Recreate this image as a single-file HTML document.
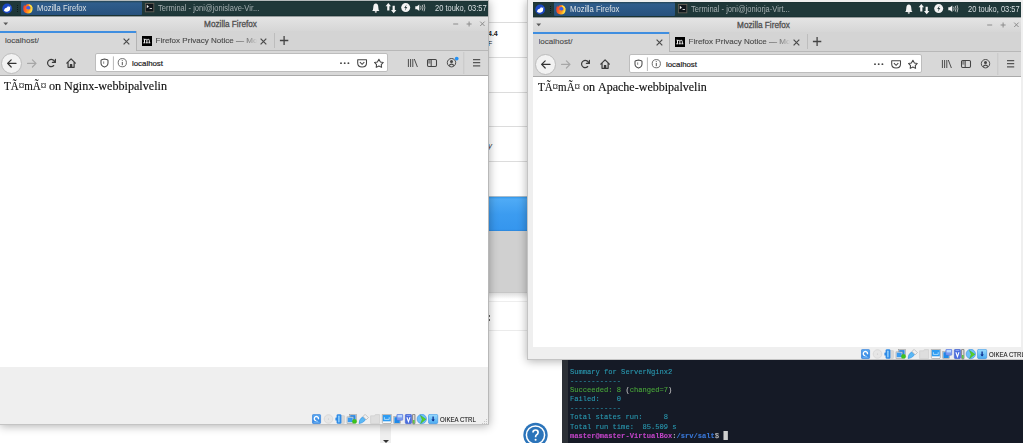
<!DOCTYPE html><html><head><meta charset="utf-8"><style>
*{margin:0;padding:0;box-sizing:border-box}
svg{display:block}
html,body{width:1023px;height:443px;overflow:hidden;background:#fff;font-family:"Liberation Sans",sans-serif}
.abs{position:absolute}
#bg{position:absolute;left:0;top:0;width:1023px;height:443px;background:#fff}
.vbox{position:absolute;background:#efefef;box-shadow:0 1px 9px rgba(0,0,0,.32)}
.vclip{position:absolute;overflow:hidden}
.g{position:absolute;width:488px;height:400px}
.g>*{position:absolute}
.panel{left:0;top:1px;width:488px;height:15px;background:linear-gradient(#172d2e 0,#1f3839 1px,#1f3839 14px,#1a3233 14px)}
.whisk{left:2px;top:2.5px;width:11px;height:11px}
.sepdots{left:16.5px;top:5px;width:1px;height:7px;border-left:1px dotted #0d1a1b}
.ffbtn{left:21px;top:1.2px;width:121px;height:13.8px;background:linear-gradient(#3465955a 0,#2f5d8c 15%,#27517d);border-radius:1px}
.fficon{left:22.3px;top:2.6px;width:12px;height:12px}
.ptxt{top:3px;height:12px;font-size:8.2px;line-height:12px;white-space:nowrap;transform-origin:0 0}
.termicon{left:145px;top:4px;width:9px;height:9px;background:#222;border:1px solid #7a7a7a}
.termicon:after{content:"";position:absolute;left:1px;top:1px;width:3px;height:3px;border-right:1px solid #ddd;border-bottom:1px solid #ddd;transform:rotate(-45deg) scale(.8)}
.tray{position:absolute}
.titlebar{left:0;top:16px;width:488px;height:15px;background:linear-gradient(#969c9c 0,#969c9c 1px,#e4e4e4 1px,#d6d6d6 100%)}
.tarrow{left:3.3px;top:22.2px;width:0;height:0;border-left:2.3px solid transparent;border-right:2.3px solid transparent;border-top:2.8px solid #555}
.ttitle{left:0;top:18.3px;width:461px;text-align:center;font-weight:normal;font-size:8.2px;line-height:14px;color:#505050;-webkit-text-stroke:0.3px #505050}
.tabbar{left:0;top:31px;width:488px;height:20px;background:#d4d4d4;border-bottom:1px solid #b8b8b8}
.tabact{left:0;top:31px;width:137px;height:20px;background:#d8d8d8;border-right:1px solid #b4b4b4}
.tabline{left:0;top:31px;width:136px;height:2px;background:#3f8ee0}
.tabtxt{top:34.8px;height:12px;font-size:8.05px;line-height:12px;white-space:nowrap;overflow:hidden;-webkit-text-stroke:0.12px currentColor}
.fade{-webkit-mask-image:linear-gradient(90deg,#000 84%,rgba(0,0,0,.35) 96%,transparent)}
.micon{left:141.5px;top:35px;width:10.5px;height:10.5px;background:#000;color:#fff;font-family:"Liberation Serif",serif;font-weight:bold;font-size:10px;line-height:9px;text-align:center;letter-spacing:-0.5px}
.tabsep{left:274px;top:33px;width:1px;height:15px;background:#bdbdbd}
.navbar{left:0;top:51px;width:488px;height:24.5px;background:#d8d8d8;border-bottom:1px solid #aaa}
.backc{left:1px;top:52.5px;width:21px;height:21px;border-radius:50%;background:#f2f2f2;border:1px solid #bcbcbc}
.urlbar{left:95px;top:53px;width:293px;height:19px;background:#fff;border:1px solid #bdbdbd;border-radius:2px}
.urltxt{left:132px;top:57.6px;height:12px;font-size:7.85px;line-height:12px;color:#222;-webkit-text-stroke:0.2px #222}
.content{left:0;top:75.5px;width:488px;height:291.5px;background:#fff}
.ctext{top:78px;font-family:"Liberation Serif",serif;font-size:12.2px;line-height:16px;color:#111;white-space:nowrap;-webkit-text-stroke:0.15px #111;transform-origin:0 0}
.term{position:absolute;left:562px;top:360px;width:461px;height:83px;background:#151a26}
.term .strip{position:absolute;left:0;top:0;width:6px;height:83px;background:#2c3036}
.tl{position:absolute;left:7.5px;font-family:"Liberation Mono",monospace;font-size:8.1px;line-height:9.1px;white-space:pre;color:#2a9cb4;-webkit-text-stroke:0.1px currentColor;transform:scaleX(.877);transform-origin:0 0}
</style></head><body><div id="bg"><div class="abs" style="left:488px;top:22px;width:40px;height:1px;background:#dcdcdc"></div><div class="abs" style="left:488px;top:57px;width:40px;height:1px;background:#dcdcdc"></div><div class="abs" style="left:488px;top:92px;width:40px;height:1px;background:#dcdcdc"></div><div class="abs" style="left:488px;top:126px;width:40px;height:1px;background:#dcdcdc"></div><div class="abs" style="left:488px;top:161px;width:40px;height:1px;background:#dcdcdc"></div><div class="abs" style="left:488px;top:301px;width:40px;height:1px;background:#eeeeee"></div><div class="abs" style="left:488px;top:330px;width:40px;height:1px;background:#ebebeb"></div><div class="abs" style="left:488px;top:315px;width:1.5px;height:1.5px;background:#666"></div><div class="abs" style="left:488px;top:319px;width:1.5px;height:1.5px;background:#666"></div><div class="abs" style="left:488px;top:196px;width:40px;height:1px;background:#a8bccc"></div><div class="abs" style="left:488px;top:197px;width:40px;height:34px;background:linear-gradient(#3197ea 0,#4fabf6 6%,#3c9cf0 50%,#3596ee 95%,#2c86da 100%)"></div><div class="abs" style="left:488px;top:231px;width:40px;height:61px;background:#d0d0d0"></div><div class="abs" style="left:488px;top:292px;width:40px;height:1px;background:#c6c6c6"></div><div class="abs" style="left:488px;top:293px;width:40px;height:6px;background:linear-gradient(#dedede,#fff)"></div><div class="abs" style="left:488px;top:141px;font-size:8px;font-style:italic;color:#333">y</div><div class="abs" style="left:488px;top:30px;font-size:7px;font-weight:bold;color:#222">4.4</div><div class="abs" style="left:488px;top:39.5px;font-size:7px;color:#222">F</div><div class="abs" style="left:380px;top:425px;width:11px;height:18px;background:#efefef"></div><div class="abs" style="left:383px;top:439.5px;width:0;height:0;border-left:3px solid transparent;border-right:3px solid transparent;border-top:3px solid #333"></div><svg class="abs" style="left:522px;top:422px" width="27" height="27" viewBox="0 0 27 27"><circle cx="13.5" cy="13" r="12.2" fill="#2b74ba"/><circle cx="13.5" cy="13" r="9.1" stroke="#fff" stroke-width="1.5" fill="none"/><path d="M11 10.6 Q11 8 13.6 8 Q16.1 8 16.1 10.4 Q16.1 12 14.4 12.9 Q13.6 13.4 13.6 15.2" stroke="#fff" stroke-width="1.7" fill="none"/><circle cx="13.6" cy="17.8" r="1.05" fill="#fff"/></svg></div><div class="vbox" style="left:0;top:0;width:489px;height:425px"><div class="abs" style="left:0;top:0;width:489px;height:1px;background:#b4babb"></div><div class="g" style="left:0px;top:0px"><div class="panel"></div><div class="whisk"><svg width="11" height="11" viewBox="0 0 11 11"><circle cx="5.2" cy="5.5" r="4.9" fill="#1a48c4"/><path d="M1.9 7.4 Q2.3 5 5 4.6 L6.2 2.7 L6.9 4.2 L8.3 3.1 L8.2 5.6 Q8.1 8.4 5.2 8.7 Q2.9 8.9 1.9 7.4Z" fill="#fff"/></svg></div><div class="sepdots"></div><div class="ffbtn"></div><div class="fficon"><svg width="12" height="12" viewBox="0 0 12 12"><defs><linearGradient id="ffg0" x1="0" y1="0" x2="1" y2="0.3"><stop offset="0" stop-color="#ee2a3a"/><stop offset="0.45" stop-color="#ff6a1c"/><stop offset="0.8" stop-color="#ffb21e"/><stop offset="1" stop-color="#ffe04a"/></linearGradient></defs><path d="M5.9 0.9 Q10.8 1.2 10.6 6.2 Q10.2 10.4 5.9 10.5 Q1.4 10.4 1.2 5.8 Q1.2 3.4 2.2 1.6 L2.9 3.2 Q3.4 1.2 5.9 0.9Z" fill="url(#ffg0)"/><path d="M6.6 1.3 Q10.3 2 10.4 5.6 Q9.6 3.4 7.6 3.2Z" fill="#ffe84a"/><circle cx="6.3" cy="5.1" r="2.1" fill="#3a5ee8"/><path d="M4.2 5.6 Q4.4 7.8 6.6 7.6 Q8.4 7.3 8.4 5.4 Q7.6 6.6 6 6.4 Q4.8 6.2 4.2 5.6Z" fill="#ff8a1c"/></svg></div><div class="ptxt" style="left:36.6px;transform:scaleX(.935);color:#dde2e5">Mozilla Firefox</div><svg style="left:144px;top:2px" width="11" height="11" viewBox="0 0 11 11"><rect x="1.4" y="1.4" width="8.4" height="8.4" fill="#10171c" stroke="#625e56" stroke-width="0.9"/><path d="M2.8 2.7 L4.9 4.5 L2.8 6.3Z" fill="#f0f0f0"/><rect x="5.6" y="6" width="2.4" height="0.9" fill="#e0e0e0"/></svg><div class="ptxt" style="left:158.3px;transform:scaleX(.92);color:#a4aeb0">Terminal - joni@jonislave-Vir...</div><svg class="tray" width="65" height="16" viewBox="0 0 65 16" style="left:365px;top:0px"><path d="M7.1 10.9 Q8.3 10 8.3 7.2 Q8.3 3.7 10.8 3.5 Q13.3 3.7 13.3 7.2 Q13.3 10 14.5 10.9 Z" fill="#f4f4f4"/><ellipse cx="10.8" cy="11.8" rx="1.1" ry="0.9" fill="#d8d8d8"/><path d="M23.3 2.9 L26 6.3 L24.4 6.3 L24.4 10.5 L22.2 10.5 L22.2 6.3 L20.6 6.3Z" fill="#f4f4f4"/><path d="M28.7 13.3 L31.4 9.9 L29.8 9.9 L29.8 5.8 L27.6 5.8 L27.6 9.9 L26 9.9Z" fill="#f4f4f4"/><circle cx="40.7" cy="7.6" r="4.5" fill="#f4f4f4"/><path d="M41.6 4.6 L39.2 8.1 L40.6 8.1 L39.9 10.7 L42.3 7.1 L40.9 7.1Z" fill="#2a3c3e"/><path d="M50.3 6.3 L52 6.3 L54.3 4.4 L54.3 11.1 L52 9.2 L50.3 9.2Z" fill="#f4f4f4"/><path d="M55.6 5.8 Q56.5 7.75 55.6 9.7 M57.3 4.9 Q58.6 7.75 57.3 10.6 M59.1 4.2 Q60.6 7.75 59.1 11.3" stroke="#b8bebe" stroke-width="0.95" fill="none"/></svg><div class="ptxt" style="left:434.8px;transform:scaleX(.916);color:#d9dfe2">20 touko, 03:57</div><div class="titlebar"></div><svg style="left:3px;top:21.5px" width="6" height="4" viewBox="0 0 6 4"><path d="M0.3 0.4 H5.1 L2.7 3.2Z" fill="#5a5a5a"/></svg><div class="ttitle">Mozilla Firefox</div><svg class="wbtn" width="40" height="10" viewBox="0 0 40 10" style="left:451px;top:18.9px"><path d="M2.2 5 H7.2" stroke="#8c8c8c" stroke-width="1"/><path d="M15.6 5 H20.6 M18.1 2.5 V7.5" stroke="#8c8c8c" stroke-width="1"/><path d="M29.2 2.6 L33.6 7 M33.6 2.6 L29.2 7" stroke="#8c8c8c" stroke-width="1"/></svg><div class="tabbar"></div><div class="tabact"></div><div class="tabline"></div><div class="tabtxt" style="left:5.0px;color:#4a4a4a">localhost/</div><svg class="x" style="left:121.5px;top:36.5px" width="9" height="9" viewBox="0 0 9 9"><path d="M1.6 1.6 L7.3 7.3 M7.3 1.6 L1.6 7.3" stroke="#4a4a4a" stroke-width="1.2"/></svg><svg style="left:142px;top:36px" width="10" height="10" viewBox="0 0 10 10"><rect width="10" height="10" fill="#000"/><path d="M1.6 3.1 H2.5 V6.8 M2.5 4.3 Q3.3 2.9 4.3 3.3 Q4.9 3.6 4.9 4.6 V6.8 M4.9 4.3 Q5.7 2.9 6.7 3.3 Q7.3 3.6 7.3 4.6 V6.8 M1.3 6.8 H3.4 M4.0 6.8 H5.8 M6.4 6.8 H8.3" stroke="#fff" stroke-width="0.95" fill="none"/></svg><div class="tabtxt fade" style="left:155.5px;width:101px;color:#4a4a4a">Firefox Privacy Notice — Mozilla</div><svg class="x" style="left:258.5px;top:36.5px" width="9" height="9" viewBox="0 0 9 9"><path d="M1.6 1.6 L7.3 7.3 M7.3 1.6 L1.6 7.3" stroke="#4a4a4a" stroke-width="1.2"/></svg><div class="tabsep"></div><svg class="x" style="left:279px;top:35px" width="11" height="11" viewBox="0 0 11 11"><path d="M0.9 5.5 H9.3 M5.1 1.1 V9.9" stroke="#444" stroke-width="1.3"/></svg><div class="navbar"></div><div class="backc" style="left:1px"></div><svg style="position:absolute;left:0px;top:50px" width="90" height="25" viewBox="0 0 90 25"><g transform="translate(7,8.6) scale(0.6)"><path d="M15 7H3.414l4.293-4.293a1 1 0 0 0-1.414-1.414l-6 6a1 1 0 0 0 0 1.414l6 6a1 1 0 0 0 1.414-1.414L3.414 9H15a1 1 0 0 0 0-2z" fill="#333"/></g><g transform="translate(36.6,8.6) scale(-0.6,0.6)"><path d="M15 7H3.414l4.293-4.293a1 1 0 0 0-1.414-1.414l-6 6a1 1 0 0 0 0 1.414l6 6a1 1 0 0 0 1.414-1.414L3.414 9H15a1 1 0 0 0 0-2z" fill="#a6a6a6"/></g><g transform="translate(46.4,8.2) scale(0.6)"><path d="M15 1a1 1 0 0 0-1 1v2.418A6.995 6.995 0 1 0 8 15a6.954 6.954 0 0 0 4.95-2.05 1 1 0 0 0-1.414-1.414A5.019 5.019 0 1 1 12.549 6H10a1 1 0 0 0 0 2h5a1 1 0 0 0 1-1V2a1 1 0 0 0-1-1z" fill="#3a3a3a"/></g><g transform="translate(66.2,8.2) scale(0.61)"><path d="M15.707 7.293l-7-7a1 1 0 0 0-1.414 0l-7 7a1 1 0 0 0 1.414 1.414L2 8.414V15a1 1 0 0 0 1 1h10a1 1 0 0 0 1-1V8.414l.293.293a1 1 0 0 0 1.414-1.414zM12 14h-2v-3.5a1 1 0 0 0-1-1H7a1 1 0 0 0-1 1V14H4V6.414l4-4 4 4z" fill="#3a3a3a"/><rect x="6.6" y="10" width="2.8" height="4.5" fill="#3a3a3a"/></g></svg><div class="urlbar" style="left:95px"></div><svg style="position:absolute;left:96px;top:54.7px" width="300" height="18" viewBox="0 0 300 18"><path d="M5 5.5 Q5 4.9 5.7 4.7 L8.5 4 L11.3 4.7 Q12 4.9 12 5.5 L12 8 Q12 10.9 8.5 12.1 Q5 10.9 5 8Z" stroke="#4a4a4a" stroke-width="1.05" fill="none" stroke-linejoin="round"/><path d="M7.7 6.4 V8.8" stroke="#777" stroke-width="0.9"/><path d="M17.4 1.4 V15" stroke="#b8b8b8" stroke-width="1"/><circle cx="26.3" cy="7.7" r="4.1" stroke="#555" stroke-width="0.85" fill="none"/><path d="M26.3 6.9 V10.2 M26.3 5.1 V5.9" stroke="#555" stroke-width="1"/><circle cx="245" cy="8.15" r="0.95" fill="#444"/><circle cx="248.7" cy="8.15" r="0.95" fill="#444"/><circle cx="252.4" cy="8.15" r="0.95" fill="#444"/><path d="M261.7 4.7 H270.5 V8 Q270.5 12 266.1 12 Q261.7 12 261.7 8 Z" stroke="#444" stroke-width="1.05" fill="none" stroke-linejoin="round"/><path d="M263.9 7.2 L266.1 9.3 L268.3 7.2" stroke="#444" stroke-width="1.05" fill="none"/><path d="M282.90 4.30 L284.40 7.05 L287.27 7.45 L285.25 9.60 L285.60 12.35 L282.90 11.05 L280.20 12.35 L280.55 9.60 L278.53 7.45 L281.40 7.05Z" stroke="#444" stroke-width="1.05" fill="none" stroke-linejoin="round"/></svg><div class="urltxt" style="left:132px">localhost</div><svg style="position:absolute;left:400px;top:50px" width="88" height="25" viewBox="0 0 88 25"><path d="M8.4 9 V17 M10.6 9 V17 M12.8 9 V17 M14.3 9 L17.4 17" stroke="#444" stroke-width="0.95" fill="none"/><rect x="27.5" y="9.4" width="9" height="7" rx="1.2" stroke="#444" stroke-width="1.05" fill="none"/><path d="M31.2 9.4 V16.4" stroke="#444" stroke-width="1"/><rect x="28.2" y="10" width="2.5" height="3.6" fill="#888"/><circle cx="51.5" cy="12.7" r="4.2" stroke="#444" stroke-width="0.95" fill="none"/><circle cx="51.5" cy="11.5" r="1.5" fill="#444"/><path d="M49 15.6 Q51.5 12.8 54 15.6" stroke="#444" stroke-width="1.3" fill="none"/><circle cx="56.7" cy="8.6" r="1.9" fill="#2592f5"/><path d="M63.8 2 V24" stroke="#c8c8c8" stroke-width="1"/><path d="M73 9.7 H80.2 M73 12.7 H80.2 M73 15.9 H80.2" stroke="#555" stroke-width="1.25" fill="none"/></svg><div class="content"></div><div class="ctext" style="left:4.4px;transform:scaleX(0.902)">TÃ¤mÃ¤</div><div class="ctext" style="left:49.1px;transform:scaleX(0.999)">on</div><div class="ctext" style="left:63.8px;transform:scaleX(0.994)">Nginx-webbipalvelin</div></div><div class="abs" style="left:488px;top:0;width:1px;height:425px;background:#b8b8b8"></div><div class="abs" style="left:0;top:424px;width:489px;height:1px;background:#c4c4c4"></div><svg style="position:absolute;left:312px;top:414px" width="128" height="11" viewBox="0 0 128 11"><defs><linearGradient id="vb1" x1="0" y1="0" x2="0" y2="1"><stop offset="0" stop-color="#5aa8f0"/><stop offset="1" stop-color="#2a7fe0"/></linearGradient><linearGradient id="vb2" x1="0" y1="0" x2="0" y2="1"><stop offset="0" stop-color="#9adcff"/><stop offset="1" stop-color="#4aaaf0"/></linearGradient></defs><rect x="0.4" y="0.4" width="8.2" height="9.2" rx="1.2" fill="url(#vb1)" stroke="#2a78d8" stroke-width="0.6"/><path d="M6.37 5.32 A2.1 2.1 0 1 0 4.04 6.67" stroke="#fff" stroke-width="1.35" fill="none"/><path d="M4.6 6.2 L6.2 7.6 L4.2 7.8Z" fill="#d8eeff"/><rect x="1.4" y="7.8" width="6.2" height="0.8" fill="#7cc0f8"/><circle cx="16.5" cy="5" r="4.3" fill="#e6e6e6" stroke="#d2d2d2" stroke-width="0.7"/><circle cx="16.5" cy="5" r="0.6" fill="#c4c4c4"/><rect x="27" y="1.5" width="5.6" height="8" rx="0.8" fill="#d6d6d6" stroke="#c8c8c8" stroke-width="0.5"/><rect x="24.6" y="0.2" width="4.8" height="9.6" rx="1.4" fill="#2f8ae6"/><rect x="23.4" y="3.4" width="1.8" height="3.2" rx="0.6" fill="#2f8ae6"/><rect x="26.2" y="1.6" width="1.4" height="6.8" rx="0.6" fill="#9ad6ff"/><rect x="37.4" y="0.3" width="7" height="6.4" fill="#e8e8e8" stroke="#8a8a8a" stroke-width="0.5"/><rect x="38.2" y="1.1" width="5.4" height="4.6" fill="#2a8ae8"/><rect x="35" y="2.9" width="6.4" height="6.6" fill="#e8e8e8" stroke="#8a8a8a" stroke-width="0.5"/><rect x="35.7" y="3.6" width="5" height="4.6" fill="#3c9cf0"/><circle cx="42.5" cy="7.4" r="2.2" fill="#3cc41c" stroke="#2a9a10" stroke-width="0.3"/><path d="M47 9.6 Q46.8 5.6 50.6 2.8 L53.6 5.8 Q50.6 9.6 47 9.6Z" fill="#5ab8f4" stroke="#2a86e0" stroke-width="0.5"/><path d="M51 2.4 L53.2 0.4 L56.4 3.6 L54.2 5.8Z" fill="#f0f0f0" stroke="#9a9a9a" stroke-width="0.5"/><path d="M58.6 1.8 H62.6 L63.2 0.6 H67.6 V9.6 H58.6Z" fill="#dedede" stroke="#cacaca" stroke-width="0.6" stroke-linejoin="round"/><path d="M70.3 0.4 H79.3 V8.4 Q79.3 9.6 78 9.6 H71.6 Q70.3 9.6 70.3 8.4Z" fill="#f8f8f8" stroke="#8a8a8a" stroke-width="0.6"/><rect x="70.8" y="1" width="8" height="6.3" fill="#2e9cf2"/><path d="M72.4 3.2 V5.4 H77.2 V3.2" stroke="#d8f0ff" stroke-width="0.7" fill="none"/><rect x="81.8" y="2.6" width="6.6" height="7" fill="#e4e4e4" stroke="#8a8a8a" stroke-width="0.5"/><rect x="82.4" y="3.2" width="5.4" height="5.8" fill="#1e8ae8"/><rect x="84.8" y="0.3" width="6" height="6" rx="0.8" fill="#7a9af0" stroke="#4a6ad8" stroke-width="0.5"/><rect x="85.6" y="1" width="4.4" height="2.4" fill="#b8d8ff"/><rect x="93.3" y="0.3" width="6.3" height="9.4" rx="1.2" fill="#4a6ee0" stroke="#3a58c0" stroke-width="0.5"/><path d="M94.9 3.3 L96.45 7.6 L98 3.3" stroke="#fff" stroke-width="1.1" fill="none"/><rect x="94.6" y="1.3" width="3.7" height="0.6" fill="#a8c0ff"/><rect x="100.7" y="0.3" width="2.2" height="9.5" rx="0.5" fill="#f4f4f4" stroke="#2a2a2a" stroke-width="0.6"/><rect x="101.2" y="6" width="1.2" height="3.4" fill="#3cc81c"/><circle cx="109.8" cy="5" r="4.7" fill="#6cc0f8" stroke="#3a8ee0" stroke-width="0.6"/><path d="M108.4 1.4 L113.9 5.3 L108.6 9.6 L110.2 5.4Z" fill="#5ad424" stroke="#38a010" stroke-width="0.4"/><rect x="116.5" y="0.3" width="9.2" height="9.4" rx="1.4" fill="url(#vb2)" stroke="#3a8ee0" stroke-width="0.6"/><path d="M121.1 2.6 V6.2" stroke="#0a2a8a" stroke-width="1.3"/><path d="M119.3 5.4 L121.1 7.6 L122.9 5.4Z" fill="#0a2a8a"/></svg><div class="abs" style="left:440px;top:414.4px;font-size:7.6px;line-height:12px;color:#2a2a2a;white-space:nowrap;transform:scaleX(.8);transform-origin:0 0;-webkit-text-stroke:0.15px #2a2a2a">OIKEA CTRL</div><svg class="abs" style="left:480px;top:418px" width="8" height="8" viewBox="0 0 8 8"><g fill="#c4c4c4"><rect x="6" y="1" width="1" height="1"/><rect x="4" y="3" width="1" height="1"/><rect x="6" y="3" width="1" height="1"/><rect x="2" y="5" width="1" height="1"/><rect x="4" y="5" width="1" height="1"/><rect x="6" y="5" width="1" height="1"/></g></svg></div><div class="vbox" style="left:527px;top:0;width:496px;height:360px"><div class="abs" style="left:6px;top:0;width:490px;height:347px;overflow:hidden"><div class="g" style="left:0px;top:1px"><div class="panel"></div><div class="whisk"><svg width="11" height="11" viewBox="0 0 11 11"><circle cx="5.2" cy="5.5" r="4.9" fill="#1a48c4"/><path d="M1.9 7.4 Q2.3 5 5 4.6 L6.2 2.7 L6.9 4.2 L8.3 3.1 L8.2 5.6 Q8.1 8.4 5.2 8.7 Q2.9 8.9 1.9 7.4Z" fill="#fff"/></svg></div><div class="sepdots"></div><div class="ffbtn"></div><div class="fficon"><svg width="12" height="12" viewBox="0 0 12 12"><defs><linearGradient id="ffg0" x1="0" y1="0" x2="1" y2="0.3"><stop offset="0" stop-color="#ee2a3a"/><stop offset="0.45" stop-color="#ff6a1c"/><stop offset="0.8" stop-color="#ffb21e"/><stop offset="1" stop-color="#ffe04a"/></linearGradient></defs><path d="M5.9 0.9 Q10.8 1.2 10.6 6.2 Q10.2 10.4 5.9 10.5 Q1.4 10.4 1.2 5.8 Q1.2 3.4 2.2 1.6 L2.9 3.2 Q3.4 1.2 5.9 0.9Z" fill="url(#ffg0)"/><path d="M6.6 1.3 Q10.3 2 10.4 5.6 Q9.6 3.4 7.6 3.2Z" fill="#ffe84a"/><circle cx="6.3" cy="5.1" r="2.1" fill="#3a5ee8"/><path d="M4.2 5.6 Q4.4 7.8 6.6 7.6 Q8.4 7.3 8.4 5.4 Q7.6 6.6 6 6.4 Q4.8 6.2 4.2 5.6Z" fill="#ff8a1c"/></svg></div><div class="ptxt" style="left:36.6px;transform:scaleX(.935);color:#dde2e5">Mozilla Firefox</div><svg style="left:144px;top:2px" width="11" height="11" viewBox="0 0 11 11"><rect x="1.4" y="1.4" width="8.4" height="8.4" fill="#10171c" stroke="#625e56" stroke-width="0.9"/><path d="M2.8 2.7 L4.9 4.5 L2.8 6.3Z" fill="#f0f0f0"/><rect x="5.6" y="6" width="2.4" height="0.9" fill="#e0e0e0"/></svg><div class="ptxt" style="left:158.3px;transform:scaleX(.92);color:#a4aeb0">Terminal - joni@joniorja-Virt...</div><svg class="tray" width="65" height="16" viewBox="0 0 65 16" style="left:365px;top:0px"><path d="M7.1 10.9 Q8.3 10 8.3 7.2 Q8.3 3.7 10.8 3.5 Q13.3 3.7 13.3 7.2 Q13.3 10 14.5 10.9 Z" fill="#f4f4f4"/><ellipse cx="10.8" cy="11.8" rx="1.1" ry="0.9" fill="#d8d8d8"/><path d="M23.3 2.9 L26 6.3 L24.4 6.3 L24.4 10.5 L22.2 10.5 L22.2 6.3 L20.6 6.3Z" fill="#f4f4f4"/><path d="M28.7 13.3 L31.4 9.9 L29.8 9.9 L29.8 5.8 L27.6 5.8 L27.6 9.9 L26 9.9Z" fill="#f4f4f4"/><circle cx="40.7" cy="7.6" r="4.5" fill="#f4f4f4"/><path d="M41.6 4.6 L39.2 8.1 L40.6 8.1 L39.9 10.7 L42.3 7.1 L40.9 7.1Z" fill="#2a3c3e"/><path d="M50.3 6.3 L52 6.3 L54.3 4.4 L54.3 11.1 L52 9.2 L50.3 9.2Z" fill="#f4f4f4"/><path d="M55.6 5.8 Q56.5 7.75 55.6 9.7 M57.3 4.9 Q58.6 7.75 57.3 10.6 M59.1 4.2 Q60.6 7.75 59.1 11.3" stroke="#b8bebe" stroke-width="0.95" fill="none"/></svg><div class="ptxt" style="left:434.8px;transform:scaleX(.916);color:#d9dfe2">20 touko, 03:57</div><div class="titlebar"></div><svg style="left:3px;top:21.5px" width="6" height="4" viewBox="0 0 6 4"><path d="M0.3 0.4 H5.1 L2.7 3.2Z" fill="#5a5a5a"/></svg><div class="ttitle">Mozilla Firefox</div><svg class="wbtn" width="40" height="10" viewBox="0 0 40 10" style="left:452px;top:18.9px"><path d="M2.2 5 H7.2" stroke="#8c8c8c" stroke-width="1"/><path d="M15.6 5 H20.6 M18.1 2.5 V7.5" stroke="#8c8c8c" stroke-width="1"/><path d="M29.2 2.6 L33.6 7 M33.6 2.6 L29.2 7" stroke="#8c8c8c" stroke-width="1"/></svg><div class="tabbar"></div><div class="tabact"></div><div class="tabline"></div><div class="tabtxt" style="left:5.5px;color:#4a4a4a">localhost/</div><svg class="x" style="left:121.5px;top:36.5px" width="9" height="9" viewBox="0 0 9 9"><path d="M1.6 1.6 L7.3 7.3 M7.3 1.6 L1.6 7.3" stroke="#4a4a4a" stroke-width="1.2"/></svg><svg style="left:142px;top:36px" width="10" height="10" viewBox="0 0 10 10"><rect width="10" height="10" fill="#000"/><path d="M1.6 3.1 H2.5 V6.8 M2.5 4.3 Q3.3 2.9 4.3 3.3 Q4.9 3.6 4.9 4.6 V6.8 M4.9 4.3 Q5.7 2.9 6.7 3.3 Q7.3 3.6 7.3 4.6 V6.8 M1.3 6.8 H3.4 M4.0 6.8 H5.8 M6.4 6.8 H8.3" stroke="#fff" stroke-width="0.95" fill="none"/></svg><div class="tabtxt fade" style="left:155.5px;width:101px;color:#4a4a4a">Firefox Privacy Notice — Mozilla</div><svg class="x" style="left:258.5px;top:36.5px" width="9" height="9" viewBox="0 0 9 9"><path d="M1.6 1.6 L7.3 7.3 M7.3 1.6 L1.6 7.3" stroke="#4a4a4a" stroke-width="1.2"/></svg><div class="tabsep"></div><svg class="x" style="left:279px;top:35px" width="11" height="11" viewBox="0 0 11 11"><path d="M0.9 5.5 H9.3 M5.1 1.1 V9.9" stroke="#444" stroke-width="1.3"/></svg><div class="navbar"></div><div class="backc" style="left:2px"></div><svg style="position:absolute;left:1px;top:50px" width="90" height="25" viewBox="0 0 90 25"><g transform="translate(7,8.6) scale(0.6)"><path d="M15 7H3.414l4.293-4.293a1 1 0 0 0-1.414-1.414l-6 6a1 1 0 0 0 0 1.414l6 6a1 1 0 0 0 1.414-1.414L3.414 9H15a1 1 0 0 0 0-2z" fill="#333"/></g><g transform="translate(36.6,8.6) scale(-0.6,0.6)"><path d="M15 7H3.414l4.293-4.293a1 1 0 0 0-1.414-1.414l-6 6a1 1 0 0 0 0 1.414l6 6a1 1 0 0 0 1.414-1.414L3.414 9H15a1 1 0 0 0 0-2z" fill="#a6a6a6"/></g><g transform="translate(46.4,8.2) scale(0.6)"><path d="M15 1a1 1 0 0 0-1 1v2.418A6.995 6.995 0 1 0 8 15a6.954 6.954 0 0 0 4.95-2.05 1 1 0 0 0-1.414-1.414A5.019 5.019 0 1 1 12.549 6H10a1 1 0 0 0 0 2h5a1 1 0 0 0 1-1V2a1 1 0 0 0-1-1z" fill="#3a3a3a"/></g><g transform="translate(66.2,8.2) scale(0.61)"><path d="M15.707 7.293l-7-7a1 1 0 0 0-1.414 0l-7 7a1 1 0 0 0 1.414 1.414L2 8.414V15a1 1 0 0 0 1 1h10a1 1 0 0 0 1-1V8.414l.293.293a1 1 0 0 0 1.414-1.414zM12 14h-2v-3.5a1 1 0 0 0-1-1H7a1 1 0 0 0-1 1V14H4V6.414l4-4 4 4z" fill="#3a3a3a"/><rect x="6.6" y="10" width="2.8" height="4.5" fill="#3a3a3a"/></g></svg><div class="urlbar" style="left:96px"></div><svg style="position:absolute;left:97px;top:54.7px" width="300" height="18" viewBox="0 0 300 18"><path d="M5 5.5 Q5 4.9 5.7 4.7 L8.5 4 L11.3 4.7 Q12 4.9 12 5.5 L12 8 Q12 10.9 8.5 12.1 Q5 10.9 5 8Z" stroke="#4a4a4a" stroke-width="1.05" fill="none" stroke-linejoin="round"/><path d="M7.7 6.4 V8.8" stroke="#777" stroke-width="0.9"/><path d="M17.4 1.4 V15" stroke="#b8b8b8" stroke-width="1"/><circle cx="26.3" cy="7.7" r="4.1" stroke="#555" stroke-width="0.85" fill="none"/><path d="M26.3 6.9 V10.2 M26.3 5.1 V5.9" stroke="#555" stroke-width="1"/><circle cx="245" cy="8.15" r="0.95" fill="#444"/><circle cx="248.7" cy="8.15" r="0.95" fill="#444"/><circle cx="252.4" cy="8.15" r="0.95" fill="#444"/><path d="M261.7 4.7 H270.5 V8 Q270.5 12 266.1 12 Q261.7 12 261.7 8 Z" stroke="#444" stroke-width="1.05" fill="none" stroke-linejoin="round"/><path d="M263.9 7.2 L266.1 9.3 L268.3 7.2" stroke="#444" stroke-width="1.05" fill="none"/><path d="M282.90 4.30 L284.40 7.05 L287.27 7.45 L285.25 9.60 L285.60 12.35 L282.90 11.05 L280.20 12.35 L280.55 9.60 L278.53 7.45 L281.40 7.05Z" stroke="#444" stroke-width="1.05" fill="none" stroke-linejoin="round"/></svg><div class="urltxt" style="left:133px">localhost</div><svg style="position:absolute;left:401px;top:50px" width="88" height="25" viewBox="0 0 88 25"><path d="M8.4 9 V17 M10.6 9 V17 M12.8 9 V17 M14.3 9 L17.4 17" stroke="#444" stroke-width="0.95" fill="none"/><rect x="27.5" y="9.4" width="9" height="7" rx="1.2" stroke="#444" stroke-width="1.05" fill="none"/><path d="M31.2 9.4 V16.4" stroke="#444" stroke-width="1"/><rect x="28.2" y="10" width="2.5" height="3.6" fill="#888"/><circle cx="51.5" cy="12.7" r="4.2" stroke="#444" stroke-width="0.95" fill="none"/><circle cx="51.5" cy="11.5" r="1.5" fill="#444"/><path d="M49 15.6 Q51.5 12.8 54 15.6" stroke="#444" stroke-width="1.3" fill="none"/><path d="M63.8 2 V24" stroke="#c8c8c8" stroke-width="1"/><path d="M73 9.7 H80.2 M73 12.7 H80.2 M73 15.9 H80.2" stroke="#555" stroke-width="1.25" fill="none"/></svg><div class="content"></div><div class="ctext" style="left:4.8px;transform:scaleX(0.900)">TÃ¤mÃ¤</div><div class="ctext" style="left:50.0px;transform:scaleX(0.999)">on</div><div class="ctext" style="left:65.1px;transform:scaleX(0.986)">Apache-webbipalvelin</div></div></div><div class="abs" style="left:0;top:0;width:1px;height:360px;background:#c4c4c4"></div><div class="abs" style="left:0;top:359px;width:496px;height:1px;background:#c4c4c4"></div><svg style="position:absolute;left:334px;top:349px" width="128" height="11" viewBox="0 0 128 11"><defs><linearGradient id="vb1" x1="0" y1="0" x2="0" y2="1"><stop offset="0" stop-color="#5aa8f0"/><stop offset="1" stop-color="#2a7fe0"/></linearGradient><linearGradient id="vb2" x1="0" y1="0" x2="0" y2="1"><stop offset="0" stop-color="#9adcff"/><stop offset="1" stop-color="#4aaaf0"/></linearGradient></defs><rect x="0.4" y="0.4" width="8.2" height="9.2" rx="1.2" fill="url(#vb1)" stroke="#2a78d8" stroke-width="0.6"/><path d="M6.37 5.32 A2.1 2.1 0 1 0 4.04 6.67" stroke="#fff" stroke-width="1.35" fill="none"/><path d="M4.6 6.2 L6.2 7.6 L4.2 7.8Z" fill="#d8eeff"/><rect x="1.4" y="7.8" width="6.2" height="0.8" fill="#7cc0f8"/><circle cx="16.5" cy="5" r="4.3" fill="#e6e6e6" stroke="#d2d2d2" stroke-width="0.7"/><circle cx="16.5" cy="5" r="0.6" fill="#c4c4c4"/><rect x="27" y="1.5" width="5.6" height="8" rx="0.8" fill="#d6d6d6" stroke="#c8c8c8" stroke-width="0.5"/><rect x="24.6" y="0.2" width="4.8" height="9.6" rx="1.4" fill="#2f8ae6"/><rect x="23.4" y="3.4" width="1.8" height="3.2" rx="0.6" fill="#2f8ae6"/><rect x="26.2" y="1.6" width="1.4" height="6.8" rx="0.6" fill="#9ad6ff"/><rect x="37.4" y="0.3" width="7" height="6.4" fill="#e8e8e8" stroke="#8a8a8a" stroke-width="0.5"/><rect x="38.2" y="1.1" width="5.4" height="4.6" fill="#2a8ae8"/><rect x="35" y="2.9" width="6.4" height="6.6" fill="#e8e8e8" stroke="#8a8a8a" stroke-width="0.5"/><rect x="35.7" y="3.6" width="5" height="4.6" fill="#3c9cf0"/><circle cx="42.5" cy="7.4" r="2.2" fill="#3cc41c" stroke="#2a9a10" stroke-width="0.3"/><path d="M47 9.6 Q46.8 5.6 50.6 2.8 L53.6 5.8 Q50.6 9.6 47 9.6Z" fill="#5ab8f4" stroke="#2a86e0" stroke-width="0.5"/><path d="M51 2.4 L53.2 0.4 L56.4 3.6 L54.2 5.8Z" fill="#f0f0f0" stroke="#9a9a9a" stroke-width="0.5"/><path d="M58.6 1.8 H62.6 L63.2 0.6 H67.6 V9.6 H58.6Z" fill="#dedede" stroke="#cacaca" stroke-width="0.6" stroke-linejoin="round"/><path d="M70.3 0.4 H79.3 V8.4 Q79.3 9.6 78 9.6 H71.6 Q70.3 9.6 70.3 8.4Z" fill="#f8f8f8" stroke="#8a8a8a" stroke-width="0.6"/><rect x="70.8" y="1" width="8" height="6.3" fill="#2e9cf2"/><path d="M72.4 3.2 V5.4 H77.2 V3.2" stroke="#d8f0ff" stroke-width="0.7" fill="none"/><rect x="81.8" y="2.6" width="6.6" height="7" fill="#e4e4e4" stroke="#8a8a8a" stroke-width="0.5"/><rect x="82.4" y="3.2" width="5.4" height="5.8" fill="#1e8ae8"/><rect x="84.8" y="0.3" width="6" height="6" rx="0.8" fill="#7a9af0" stroke="#4a6ad8" stroke-width="0.5"/><rect x="85.6" y="1" width="4.4" height="2.4" fill="#b8d8ff"/><rect x="93.3" y="0.3" width="6.3" height="9.4" rx="1.2" fill="#4a6ee0" stroke="#3a58c0" stroke-width="0.5"/><path d="M94.9 3.3 L96.45 7.6 L98 3.3" stroke="#fff" stroke-width="1.1" fill="none"/><rect x="94.6" y="1.3" width="3.7" height="0.6" fill="#a8c0ff"/><rect x="100.7" y="0.3" width="2.2" height="9.5" rx="0.5" fill="#f4f4f4" stroke="#2a2a2a" stroke-width="0.6"/><rect x="101.2" y="6" width="1.2" height="3.4" fill="#3cc81c"/><circle cx="109.8" cy="5" r="4.7" fill="#6cc0f8" stroke="#3a8ee0" stroke-width="0.6"/><path d="M108.4 1.4 L113.9 5.3 L108.6 9.6 L110.2 5.4Z" fill="#5ad424" stroke="#38a010" stroke-width="0.4"/><rect x="116.5" y="0.3" width="9.2" height="9.4" rx="1.4" fill="url(#vb2)" stroke="#3a8ee0" stroke-width="0.6"/><path d="M121.1 2.6 V6.2" stroke="#0a2a8a" stroke-width="1.3"/><path d="M119.3 5.4 L121.1 7.6 L122.9 5.4Z" fill="#0a2a8a"/></svg><div class="abs" style="left:462px;top:349.4px;font-size:7.6px;line-height:12px;color:#2a2a2a;white-space:nowrap;transform:scaleX(.8);transform-origin:0 0;-webkit-text-stroke:0.15px #2a2a2a">OIKEA CTRL</div></div><div class="term"><div class="strip"></div><div class="tl" style="top:6.60px;color:#2a9cb4"><span>Summary for ServerNginx2</span></div><div class="tl" style="top:15.75px;color:#2a9cb4">------------</div><div class="tl" style="top:24.90px;color:#2a9cb4"><span style="color:#4aa83a">Succeeded: 8</span> <span style="color:#c8c8c8">(</span><span style="color:#4aa83a">changed=7</span><span style="color:#c8c8c8">)</span></div><div class="tl" style="top:34.05px;color:#2a9cb4">Failed:    0</div><div class="tl" style="top:43.20px;color:#2a9cb4">------------</div><div class="tl" style="top:52.35px;color:#2a9cb4">Total states run:     8</div><div class="tl" style="top:61.50px;color:#2a9cb4">Total run time:  85.509 s</div><div class="tl" style="top:70.65px;color:#2a9cb4"><span style="color:#c144c6;font-weight:bold">master@master-VirtualBox</span><span style="color:#c8c8c8">:</span><span style="color:#3a78d8;font-weight:bold">/srv/salt</span><span style="color:#c8c8c8">$ </span><span style="background:#cfcfcf"> </span></div></div></body></html>
